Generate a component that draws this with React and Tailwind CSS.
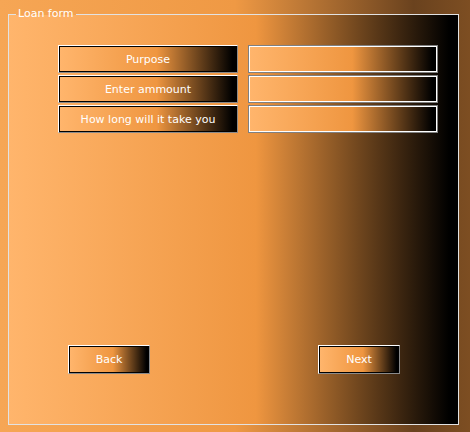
import React from "react";

const font = { fontFamily: '"DejaVu Sans", Verdana, sans-serif' };

const Raised = ({ className, children }) => (
  <div className={`border-t border-l border-white border-r border-b border-r-[#8a8a8a] border-b-[#8a8a8a] ${className}`}>
    <div className="h-full w-full border border-black bg-[linear-gradient(to_right,#ffb56c_0%,#ef9640_55%,#000_98%)] flex items-center justify-center pt-[2px] text-white text-[11px]">
      {children}
    </div>
  </div>
);

const Field = () => (
  <div className="w-[190px] h-[28px] border border-[#808080]">
    <input
      type="text"
      className="h-full w-full border border-white bg-[linear-gradient(to_right,#ffb56c_0%,#ef9640_55%,#000_98%)] outline-none"
    />
  </div>
);

export default function App() {
  const rows = ["Purpose", "Enter ammount", "How long will it take you"];

  return (
    <div
      className="w-[470px] h-[432px] pt-[7px] pl-[8px] pr-[11px] pb-[7px] bg-[linear-gradient(to_right,#f6a655_0%,#ef9944_50%,#6a421e_88%,#7d4e22_100%)]"
      style={font}
    >
      <fieldset className="h-full border border-[#e2e2e2] bg-[linear-gradient(to_right,#ffb56c_0%,#ef9640_55%,#000_98%)] flex flex-col">
        <legend className="ml-[7px] px-[2px] text-[11px] text-white leading-[14px]">Loan form</legend>

        <div className="flex flex-col gap-[2px] pl-[49px] mt-[24px]">
          {rows.map((r) => (
            <div key={r} className="flex gap-[10px]">
              <Raised className="w-[180px] h-[28px]">{r}</Raised>
              <Field />
            </div>
          ))}
        </div>

        <div className="flex-1" />

        {/* Buttons */}
        <div className="flex gap-[168px] pl-[59px] pb-[50px]">
          <Raised className="w-[82px] h-[29px]">Back</Raised>
          <Raised className="w-[82px] h-[29px]">Next</Raised>
        </div>
      </fieldset>
    </div>
  );
}
